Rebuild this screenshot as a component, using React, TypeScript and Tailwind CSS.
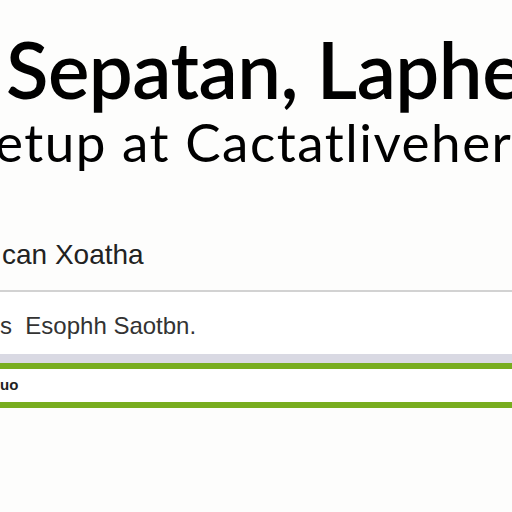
import React from 'react';

export default function App() {
  return (
    <div className="w-[512px] h-[512px] overflow-hidden bg-[#fdfdfc] text-black">
      <h1
        className="mt-[24px] pl-[6px] whitespace-nowrap text-[78px] leading-[90px] font-semibold tracking-[-0.5px]"
        style={{ fontFamily: 'Lato, "Open Sans", sans-serif' }}
      >
        Sepatan, Laphe
      </h1>
      <p
        className="-ml-[5px] whitespace-nowrap text-[53px] leading-[56px] tracking-[1.5px]"
        style={{ fontFamily: 'Lato, "Open Sans", sans-serif' }}
      >
        etup at Cactatliveher
      </p>

      <div className="mt-[70px] font-['Liberation_Sans',Arial,sans-serif]">
        <div className="pl-[2px] whitespace-nowrap text-[28px] leading-[30px] text-[#222]">can Xoatha</div>

        <div className="mt-[20px] border-t-2 border-[#d2d2d2] bg-white">
          <div className="h-[62px] flex items-center whitespace-nowrap text-[24px] text-[#333] pt-[6px]">
            s&nbsp; Esophh Saotbn.
          </div>
          <div className="h-[9px] bg-[#d9d9e3]" />
        </div>

        <div className="border-y-[6px] border-[#78ad1f] bg-white">
          <div className="h-[33px] flex items-center text-[15px] font-bold text-[#222]">uo</div>
        </div>
      </div>
    </div>
  );
}
